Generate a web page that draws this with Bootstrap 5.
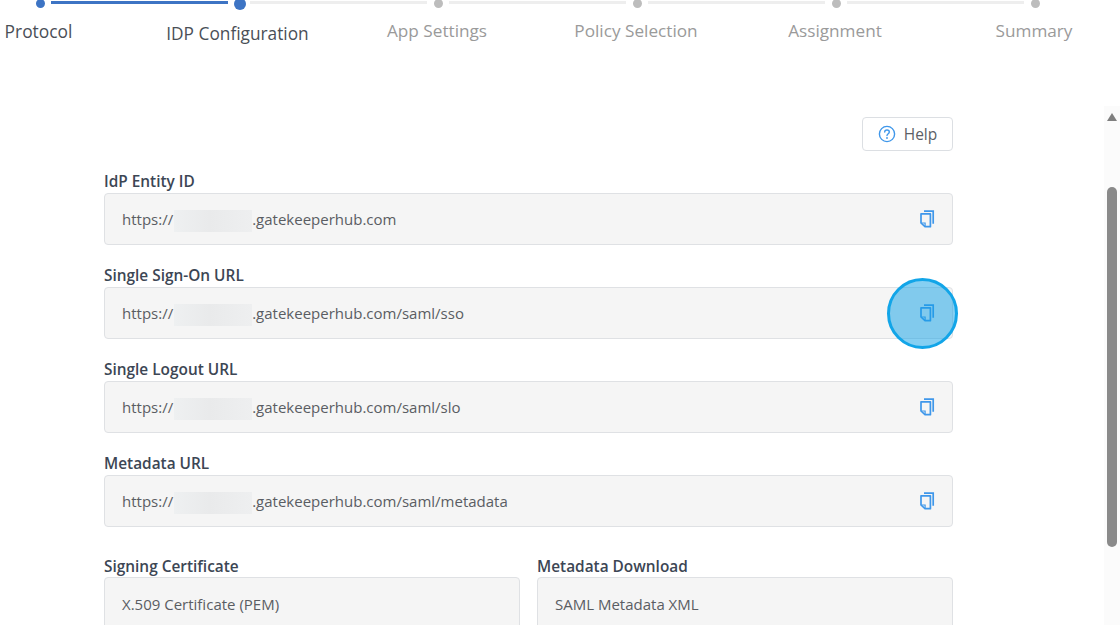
<!DOCTYPE html>
<html lang="en">
<head>
  <meta charset="UTF-8">
  <title>IDP Configuration</title>
  <link href="https://cdn.jsdelivr.net/npm/bootstrap@5.3.0/dist/css/bootstrap.min.css" rel="stylesheet">
  <style>
    html, body { height: 100%; overflow: hidden; background: #fff; }
    body { font-family: "Open Sans", "Noto Sans", sans-serif; color: #495057; position: relative; }

    .wiz-steps { width: 1194px; margin-left: -59px; height: 120px; margin-top: -3px; }
    .wiz-step { width: 199px; flex: none; position: relative; text-align: center; }
    .wiz-dot { width: 9px; height: 9px; border-radius: 50%; background: #bdbdbd; margin: 2px auto 0; }
    .wiz-line { position: absolute; top: 4px; left: 110px; width: 177px; height: 3px; background: #eeeeee; }
    .wiz-label { display: block; margin-top: 11px; margin-left: -3px; font-size: 17.2px; line-height: 24px; color: #9a9a9a; }
    .wiz-step.is-done .wiz-dot { background: #3d74c4; }
    .wiz-step.is-done .wiz-line { background: #3d74c4; }
    .wiz-step.is-done .wiz-label { color: #4a4f57; margin-left: -4px; font-size: 17.4px; }
    .wiz-step.is-active .wiz-dot { background: #3d74c4; width: 12px; height: 12px; margin-top: 1px; }
    .wiz-step.is-active .wiz-label { color: #4a4f57; font-size: 17.3px; margin-top: 12px; margin-left: -4px; }

    .idp-wrap { width: 849px; margin-left: 104px; }
    .help-btn { width: 91px; height: 34px; font-size: 15.5px; color: #5c5f66; border: 1px solid #dcdfe3; border-radius: 4px; background: #fff; padding-top: 2px !important; }
    .help-btn svg { width: 18px; height: 18px; margin-top: -2px; }
    .fld-label { font-size: 15.4px; font-weight: 600; color: #3c4654; line-height: 22px; height: 20px; margin-bottom: 2px; }
    .fld-box { height: 52px; background: #f5f5f5; border: 1px solid #dfe1e4; border-radius: 4px; font-size: 15px; color: #5a5d63; padding: 2px 17px 0; position: relative; }
    .fld-group { margin-bottom: 20px; }
    .fld-first { margin-top: 20px; }
    .blur-part { display: inline-block; width: 78px; height: 22px; margin-left: 1px; vertical-align: middle; background: linear-gradient(90deg, #eef0f1, #e9eaeb 45%, #eeeff0); }
    .copy-ico { width: 16px; height: 18px; color: #3f97ea; margin-top: -2px; }
    .split-row { margin-top: 29px; gap: 17px; }
    .split-row > div { flex: 1 1 0; }
    .split-row .fld-label { margin-bottom: 1px; height: 20px; }
    .split-row .fld-box { height: 70px; padding-top: 15px; line-height: 22px; }

    .click-mark { position: absolute; left: 887px; top: 278px; width: 71px; height: 71px; border-radius: 50%; background: rgba(14, 159, 230, .5); border: 3px solid #12a5e8; pointer-events: none; }
    .fake-scroll { position: absolute; top: 106px; right: 0; bottom: 0; width: 16px; background: #fbfbfb; }
    .fake-scroll .arrow-up { position: absolute; left: 3px; top: 7px; width: 0; height: 0; border-left: 5px solid transparent; border-right: 5px solid transparent; border-bottom: 8px solid #7f7f7f; }
    .fake-scroll .thumb { position: absolute; left: 3px; top: 81px; width: 10px; height: 360px; border-radius: 5px; background: #8a8a8a; }
  </style>
</head>
<body>
  <svg width="0" height="0" class="position-absolute">
    <symbol id="copyIco" viewBox="0 0 16 18">
      <path d="M5 1.2h9.2v12.6" fill="none" stroke="currentColor" stroke-width="1.7"/>
      <path d="M2 3.8h9.4v12.9H6L2 13z" fill="none" stroke="currentColor" stroke-width="1.7" stroke-linejoin="round"/>
      <path d="M2.5 13h3.6v3.4" fill="none" stroke="currentColor" stroke-width="1.2"/>
    </symbol>
  </svg>

  <!-- wizard steps -->
  <div class="wiz-steps d-flex">
    <div class="wiz-step is-done"><div class="wiz-dot"></div><div class="wiz-line"></div><span class="wiz-label">Protocol</span></div>
    <div class="wiz-step is-active"><div class="wiz-dot"></div><div class="wiz-line"></div><span class="wiz-label">IDP Configuration</span></div>
    <div class="wiz-step"><div class="wiz-dot"></div><div class="wiz-line"></div><span class="wiz-label">App Settings</span></div>
    <div class="wiz-step"><div class="wiz-dot"></div><div class="wiz-line"></div><span class="wiz-label">Policy Selection</span></div>
    <div class="wiz-step"><div class="wiz-dot"></div><div class="wiz-line"></div><span class="wiz-label">Assignment</span></div>
    <div class="wiz-step"><div class="wiz-dot"></div><span class="wiz-label">Summary</span></div>
  </div>

  <div class="idp-wrap">
    <div class="d-flex justify-content-end">
      <button type="button" class="help-btn d-flex align-items-center justify-content-center gap-2 p-0">
        <svg viewBox="0 0 18 18" fill="none" stroke="#3f97ea" stroke-width="1.4">
          <circle cx="9" cy="9" r="7.6"/>
          <path d="M6.7 7.1c0-1.3 1-2.1 2.3-2.1s2.3.8 2.3 2c0 1.7-2.3 1.8-2.3 3.6" stroke-linecap="round"/>
          <circle cx="9" cy="13" r=".9" fill="#3f97ea" stroke="none"/>
        </svg>
        Help
      </button>
    </div>

    <div class="fld-group fld-first">
      <div class="fld-label">IdP Entity ID</div>
      <div class="fld-box d-flex align-items-center justify-content-between">
        <span>https://<span class="blur-part"></span>.gatekeeperhub.com</span>
        <svg class="copy-ico"><use href="#copyIco"/></svg>
      </div>
    </div>
    <div class="fld-group">
      <div class="fld-label">Single Sign-On URL</div>
      <div class="fld-box d-flex align-items-center justify-content-between">
        <span>https://<span class="blur-part"></span>.gatekeeperhub.com/saml/sso</span>
        <svg class="copy-ico"><use href="#copyIco"/></svg>
      </div>
    </div>
    <div class="fld-group">
      <div class="fld-label">Single Logout URL</div>
      <div class="fld-box d-flex align-items-center justify-content-between">
        <span>https://<span class="blur-part"></span>.gatekeeperhub.com/saml/slo</span>
        <svg class="copy-ico"><use href="#copyIco"/></svg>
      </div>
    </div>
    <div class="fld-group mb-0">
      <div class="fld-label">Metadata URL</div>
      <div class="fld-box d-flex align-items-center justify-content-between">
        <span>https://<span class="blur-part"></span>.gatekeeperhub.com/saml/metadata</span>
        <svg class="copy-ico"><use href="#copyIco"/></svg>
      </div>
    </div>

    <div class="split-row d-flex">
      <div>
        <div class="fld-label">Signing Certificate</div>
        <div class="fld-box">X.509 Certificate (PEM)</div>
      </div>
      <div>
        <div class="fld-label">Metadata Download</div>
        <div class="fld-box">SAML Metadata XML</div>
      </div>
    </div>
  </div>

  <!-- click highlight and window scrollbar lie over the page -->
  <div class="click-mark"></div>
  <div class="fake-scroll"><div class="arrow-up"></div><div class="thumb"></div></div>

  <script src="https://cdn.jsdelivr.net/npm/bootstrap@5.3.0/dist/js/bootstrap.bundle.min.js"></script>
</body>
</html>
